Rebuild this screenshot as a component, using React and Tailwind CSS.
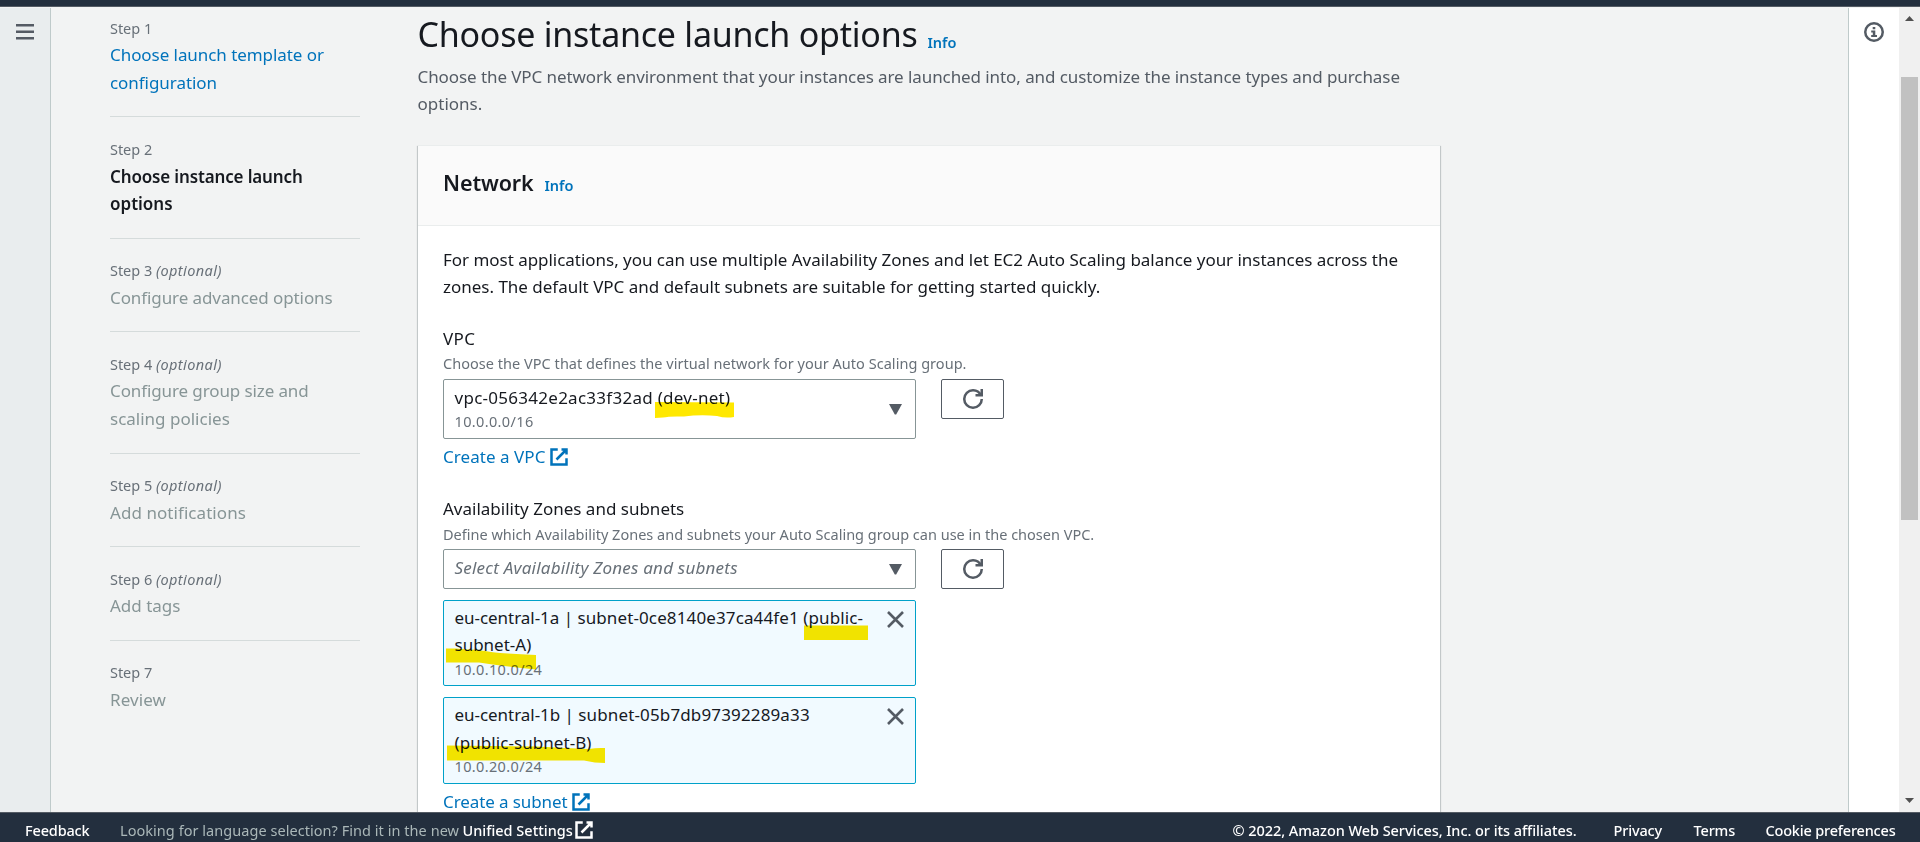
const BODY = "text-[17px] leading-[27.5px] whitespace-nowrap";
const HELP = "text-[14.5px] leading-[20px] whitespace-nowrap text-[#687078]";

function ExternalIcon() {
  return (
    <svg viewBox="0 0 16 16" className="size-5 shrink-0" fill="none" stroke="currentColor" strokeWidth="2">
      <path d="M10 2h4v4M6 10l8-8" />
      <path d="M14 9.05V14H2V2h5" />
    </svg>
  );
}

function RefreshButton() {
  return (
    <button className="flex h-[40px] w-[63px] shrink-0 items-center justify-center rounded-[2px] border border-[#545b64] bg-white text-[#545b64]">
      <svg viewBox="0 0 16 16" className="size-5" fill="none" stroke="currentColor" strokeWidth="2">
        <path d="M10 5h5V0" />
        <path d="M15 8a6.957 6.957 0 0 1-7 7 6.957 6.957 0 0 1-7-7 6.957 6.957 0 0 1 7-7 6.87 6.87 0 0 1 6.3 4" />
      </svg>
    </button>
  );
}

function Caret() {
  return (
    <svg viewBox="0 0 13 11" className="mt-px mr-[13.5px] h-[11px] w-[13px] shrink-0 fill-[#545b64]">
      <path d="M0 0h13L7.2 10.5H5.8z" />
    </svg>
  );
}

function CloseIcon() {
  return (
    <svg viewBox="0 0 17 17" className="mt-[10.5px] mr-[11.5px] size-[17px] shrink-0" fill="none" stroke="#545b64" strokeWidth="2.6">
      <path d="M1 1l15 15M16 1L1 16" />
    </svg>
  );
}

const steps = [
  { n: 1, lines: [["Choose launch template or", "tracking-[-0.06px]"], ["configuration", "tracking-[-0.05px]"]], tone: "text-[#0073bb]" },
  { n: 2, lines: [["Choose instance launch", "tracking-[-0.15px]"], ["options", ""]], tone: "font-semibold text-[#16191f]" },
  { n: 3, optional: true, lines: [["Configure advanced options", "tracking-[-0.09px]"]], tone: "text-[#879596]" },
  { n: 4, optional: true, lines: [["Configure group size and", "tracking-[-0.11px]"], ["scaling policies", ""]], tone: "text-[#879596]" },
  { n: 5, optional: true, lines: [["Add notifications", "tracking-[0.06px]"]], tone: "text-[#879596]" },
  { n: 6, optional: true, lines: [["Add tags", ""]], tone: "text-[#879596]" },
  { n: 7, lines: [["Review", "tracking-[0.1px]"]], tone: "text-[#879596]" },
];

function Steps() {
  return (
    <ol className="mr-[57.5px] ml-[59px] w-[250px] shrink-0">
      {steps.map((s) => (
        <li
          key={s.n}
          className={
            s.n === 1
              ? "pt-[9.6px] pb-[20.2px]"
              : "border-t border-[#d5dbdb] pt-[20.4px] pb-[20.15px]"
          }
        >
          <div className="mb-[2.7px] text-[14.5px] leading-[22px] tracking-[-0.04px] whitespace-nowrap text-[#687078]">
            Step {s.n} {s.optional && <i className="tracking-[0.4px]">(optional)</i>}
          </div>
          {s.lines.map(([t, tracking]) => (
            <div key={t} className={`${BODY} ${s.tone} ${tracking}`}>{t}</div>
          ))}
        </li>
      ))}
    </ol>
  );
}

function Marker({ className, d }) {
  return (
    <svg className={`pointer-events-none absolute overflow-visible mix-blend-multiply ${className}`} fill="#ffe800">
      <path d={d} />
    </svg>
  );
}

function NetworkPanel() {
  return (
    <section className="mt-[26.6px] h-[760px] w-[1022.5px] bg-white shadow-[0_1px_1px_rgba(0,28,36,0.3),1px_1px_1px_rgba(0,28,36,0.15),-1px_1px_1px_rgba(0,28,36,0.15)]">
      <header className="flex h-[81.5px] items-baseline border-y border-[#eaeded] bg-[#fafafa] px-[25.5px] pt-[23.5px]">
        <h2 className="w-[101.5px] text-[21.5px] leading-[27px] font-semibold tracking-[-0.12px]">Network</h2>
        <a className="text-[14.5px] font-semibold text-[#0073bb]">Info</a>
      </header>
      <div className="pt-[19.5px] pl-[25.5px]">
        <p className={BODY}>
          <span className="tracking-[-0.031px]">For most applications, you can use multiple Availability Zones and let EC2 Auto Scaling balance your instances across the</span>
          <br />
          <span className="tracking-[-0.01px]">zones. The default VPC and default subnets are suitable for getting started quickly.</span>
        </p>

        <div className={`mt-[24.1px] ${BODY} tracking-[0.4px]`}>VPC</div>
        <div className={`mt-[0.8px] ${HELP} tracking-[0.033px]`}>Choose the VPC that defines the virtual network for your Auto Scaling group.</div>
        <div className="mt-[6.4px] flex h-[59.4px] items-start gap-[25px]">
          <div className="relative flex h-full w-[473px] items-center justify-between rounded-[2px] border border-[#879596] bg-white pl-[10.5px]">
            <div className="pb-[3px]">
              <div className={`${BODY} tracking-[0.27px]`}>vpc-056342e2ac33f32ad (dev-net)</div>
              <div className={`-mt-[0.5px] ${HELP} tracking-[0.36px]`}>10.0.0.0/16</div>
            </div>
            <Caret />
            <Marker className="top-[21px] left-[211px] h-[18px] w-[80px]" d="M0 1L79 1.5V16Q70 17.5 62 15Q45 13.5 29 15.5Q14 15 8 16.5L0 17z" />
          </div>
          <RefreshButton />
        </div>
        <a className={`mt-[4px] flex items-center text-[#0073bb] ${BODY} tracking-[0.05px]`}>
          <span className="w-[106.2px]">Create a VPC</span>
          <ExternalIcon />
        </a>

        <div className={`mt-[24.5px] ${BODY}`}>Availability Zones and subnets</div>
        <div className={`mt-[1.3px] ${HELP}`}>Define which Availability Zones and subnets your Auto Scaling group can use in the chosen VPC.</div>
        <div className="mt-[5.6px] flex h-[40px] items-start gap-[25px]">
          <div className="flex h-full w-[473px] items-center justify-between rounded-[2px] border border-[#879596] bg-white pl-[10.5px]">
            <i className={`pb-[2px] ${BODY} tracking-[0.22px] text-[#687078]`}>Select Availability Zones and subnets</i>
            <Caret />
          </div>
          <RefreshButton />
        </div>

        <div className="relative mt-[10.5px] flex h-[86.5px] w-[473px] items-start justify-between rounded-[2px] border border-[#00a1c9] bg-[#f1faff] pt-[3.2px] pl-[10.5px]">
          <div>
            <div className={BODY}>
              <span className="tracking-[-0.04px]">eu-central-1a | </span>
              <span className="tracking-[0.12px]">subnet-0ce8140e37ca44fe1 (public-</span>
              <br />
              subnet-A)
            </div>
            <div className={`${HELP} tracking-[0.36px]`}>10.0.10.0/24</div>
          </div>
          <div className="-mt-[3.2px]"><CloseIcon /></div>
          <Marker className="top-[24px] left-[360px] h-[15px] w-[65px]" d="M0 0.5H64V15H0z" />
          <Marker className="top-[47px] left-[2px] h-[22px] w-[90px]" d="M0 0.5H10Q22 2 30 1.5Q48 5.5 90 7V21.5Q55 18 33 14.5H0z" />
        </div>

        <div className="relative mt-[10.5px] flex h-[87px] w-[473px] items-start justify-between rounded-[2px] border border-[#00a1c9] bg-[#f1faff] pt-[3.4px] pl-[10.5px]">
          <div>
            <div className={BODY}>
              <span className="tracking-[-0.04px]">eu-central-1b | </span>
              <span className="tracking-[0.14px]">subnet-05b7db97392289a33</span>
              <br />
              <span className="tracking-[0.066px]">(public-subnet-B)</span>
            </div>
            <div className={`${HELP} tracking-[0.36px]`}>10.0.20.0/24</div>
          </div>
          <div className="-mt-[3.4px]"><CloseIcon /></div>
          <Marker className="top-[47px] left-[3px] h-[18px] w-[158px]" d="M0 0.5L90 1.5Q120 3 142 4Q150 2.5 158 3V18Q148 18 137 15.5H0z" />
        </div>
        <a className={`mt-[4.5px] flex items-center text-[#0073bb] ${BODY} tracking-[-0.1px]`}>
          <span className="w-[128px]">Create a subnet</span>
          <ExternalIcon />
        </a>
      </div>
    </section>
  );
}

export default function App() {
  return (
    <div className="flex h-[842px] w-[1920px] flex-col overflow-hidden bg-[#f2f3f3] font-['Noto_Sans','Open_Sans',sans-serif] text-[#16191f]">
      <div className="h-[7px] shrink-0 border-b border-[#545b64] bg-[#232f3e]" />
      <div className="flex h-[805px] shrink-0 overflow-hidden">
        <aside className="mt-px w-[51px] shrink-0 border-r border-[#bfcaca] bg-[#e9edee]">
          <svg viewBox="0 0 18 16" className="mt-4 ml-4 h-4 w-[18px] fill-[#545b64]">
            <path d="M0 0h18v2.5H0zM0 6.6h18v2.5H0zM0 13.1h18v2.5H0z" />
          </svg>
        </aside>
        <Steps />
        <main className="w-[1023px] shrink-0 pt-[4.8px]">
          <div className="flex items-baseline whitespace-nowrap">
            <h1 className="w-[510px] text-[34px] leading-[44px] tracking-[-0.24px]">Choose instance launch options</h1>
            <a className="translate-y-px text-[14.5px] font-semibold text-[#0073bb]">Info</a>
          </div>
          <p className={`mt-[7.2px] ${BODY} text-[#545b64]`}>
            <span className="tracking-[-0.08px]">Choose the VPC network environment that your instances are launched into, and customize the instance types and purchase</span>
            <br />
            options.
          </p>
          <NetworkPanel />
        </main>
        <div className="grow" />
        <aside className="mt-px w-[51px] shrink-0 border-l border-[#bfcaca] bg-white">
          <svg viewBox="0 0 20 20" className="mt-[14px] ml-[15px] size-5">
            <circle cx="10" cy="10" r="8.75" fill="none" stroke="#545b64" strokeWidth="2.5" />
            <path d="M8.7 4.9h2.6v2.4H8.7zM7.2 8.6h4.1v4.5h1.7v1.8H7.2v-1.8h1.6v-2.7H7.2z" fill="#545b64" />
          </svg>
        </aside>
        <div className="flex w-[21px] shrink-0 flex-col items-center bg-[#f0f0f0]">
          <svg viewBox="0 0 9 5" className="mt-[9px] h-[5px] w-[9px] shrink-0 fill-[#505050]"><path d="M4.5 0L9 5H0z" /></svg>
          <div className="mt-[56px] h-[443px] w-[17px] shrink-0 bg-[#c1c1c1]" />
          <svg viewBox="0 0 9 5" className="mt-auto mb-[9px] h-[5px] w-[9px] shrink-0 fill-[#505050]"><path d="M0 0h9L4.5 5z" /></svg>
        </div>
      </div>
      <footer className="flex h-[30px] shrink-0 items-center border-t border-[#545b64] bg-[#232f3e] pt-[5px] pr-[25px] pl-[25px] text-[14.5px] leading-[22px] font-medium whitespace-nowrap text-white">
        <span className="w-[95px] tracking-[-0.16px]">Feedback</span>
        <span className="w-[342.5px] font-normal tracking-[0.044px] text-[#aab7b8]">Looking for language selection? Find it in the new</span>
        <span className="w-[111px]">Unified Settings</span>
        <ExternalIcon />
        <span className="ml-auto w-[381px] tracking-[-0.06px]">© 2022, Amazon Web Services, Inc. or its affiliates.</span>
        <span className="w-[80px] tracking-[-0.16px]">Privacy</span>
        <span className="w-[72px] tracking-[-0.16px]">Terms</span>
        <span className="w-[129.5px] tracking-[-0.19px]">Cookie preferences</span>
      </footer>
    </div>
  );
}
